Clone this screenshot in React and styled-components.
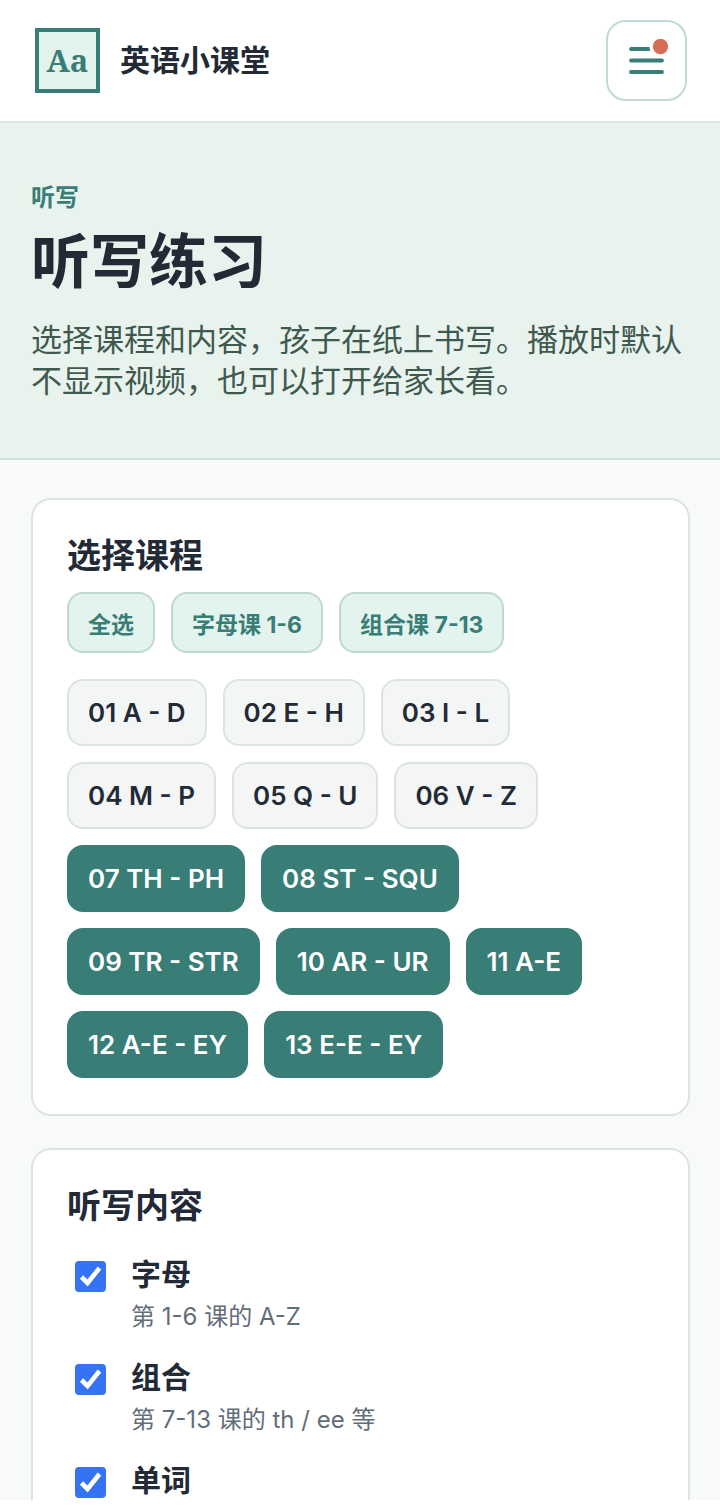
import { useState } from "react";
import styled, { createGlobalStyle } from "styled-components";

const lessonList = [
    "01 A - D",
    "02 E - H",
    "03 I - L",
    "04 M - P",
    "05 Q - U",
    "06 V - Z",
    "07 TH - PH",
    "08 ST - SQU",
    "09 TR - STR",
    "10 AR - UR",
    "11 A-E",
    "12 A-E - EY",
    "13 E-E - EY",
];

const contentList = [
    { id: "letters", name: "字母", hint: "第 1-6 课的 A-Z" },
    { id: "groups", name: "组合", hint: "第 7-13 课的 th / ee 等" },
    { id: "words", name: "单词" },
];

export default function App(){
    const [selected,setSelected] = useState(lessonList.slice(6));
    const [contents,setContents] = useState(["letters","groups","words"]);

    function toggle(list,setList,item){
        setList(list.includes(item) ? list.filter(i=>i !== item) : [...list,item]);
    }

    return(
        <Screen>
            <GlobalStyle/>
            <Header>
                <Brand href="#">
                    <Logo>Aa</Logo>
                    <span>英语小课堂</span>
                </Brand>
                <MenuButton type="button" aria-label="菜单">
                    <MenuIcon/>
                </MenuButton>
            </Header>
            <Hero>
                <Kicker>听写</Kicker>
                <h1>听写练习</h1>
                <p>选择课程和内容，孩子在纸上书写。播放时默认不显示视频，也可以打开给家长看。</p>
            </Hero>
            <Main>
                <Card>
                    <h2>选择课程</h2>
                    <Shortcuts>
                        <Shortcut type="button" onClick={()=>setSelected(lessonList)}>全选</Shortcut>
                        <Shortcut type="button" onClick={()=>setSelected(lessonList.slice(0,6))}>字母课 1-6</Shortcut>
                        <Shortcut type="button" onClick={()=>setSelected(lessonList.slice(6))}>组合课 7-13</Shortcut>
                    </Shortcuts>
                    <Lessons>
                        {lessonList.map(lesson=>(
                            <Lesson
                                key={lesson}
                                type="button"
                                aria-pressed={selected.includes(lesson)}
                                $active={selected.includes(lesson)}
                                onClick={()=>toggle(selected,setSelected,lesson)}
                            >
                                {lesson}
                            </Lesson>
                        ))}
                    </Lessons>
                </Card>
                <Card>
                    <h2>听写内容</h2>
                    <Options>
                        {contentList.map(({id,name,hint})=>(
                            <Option key={id} htmlFor={id}>
                                <Checkbox
                                    id={id}
                                    checked={contents.includes(id)}
                                    onChange={()=>toggle(contents,setContents,id)}
                                />
                                <OptionText>
                                    <strong>{name}</strong>
                                    {hint && <small>{hint}</small>}
                                </OptionText>
                            </Option>
                        ))}
                    </Options>
                </Card>
            </Main>
        </Screen>
    )
}

function MenuIcon(){
    return(
        <svg width="44" height="44" viewBox="0 0 44 44" fill="none" aria-hidden="true">
            <path d="M6 10H40M6 21.5H37M6 33H37" stroke="#387d76" strokeWidth="3.8" strokeLinecap="round"/>
            <circle cx="35.5" cy="7.5" r="11" fill="#fff"/>
            <circle cx="35.5" cy="7.5" r="7.7" fill="#d66e57"/>
        </svg>
    )
}

function Checkbox(props){
    return(
        <Tick>
            <input type="checkbox" {...props}/>
            <svg viewBox="0 0 31 31" fill="none" aria-hidden="true">
                <path d="M6.5 16L12.5 22L24.5 7" stroke="#fff" strokeWidth="4.6"/>
            </svg>
        </Tick>
    )
}

const GlobalStyle = createGlobalStyle`
    *{
        box-sizing: border-box;
    }
    body{
        margin: 0;
        background: #fff;
        color: #222a35;
        font-family: Inter, "Noto Sans CJK SC", sans-serif;
    }
    button{
        font-family: inherit;
        cursor: pointer;
    }
    h1,h2,p{
        margin: 0;
    }
`
const Screen = styled.div`
    height: 100vh;
    border-bottom: 7px solid #fff;
    background: #f7faf7;
    overflow: hidden;
`
const Header = styled.header`
    display: flex;
    justify-content: space-between;
    align-items: center;
    padding: 20px 33px 20px 35px;
    border-bottom: 2px solid #dae5e1;
    background: #fff;
`
const Brand = styled.a`
    display: flex;
    align-items: center;
    gap: 20px;
    color: inherit;
    font-size: 30px;
    font-weight: 700;
    line-height: 41px;
    text-decoration: none;
`
const Logo = styled.span`
    display: flex;
    justify-content: center;
    align-items: center;
    width: 65px;
    height: 65px;
    border: 4px solid #387d76;
    background: #e3f3ed;
    color: #387d76;
    font-family: "Noto Serif", "Liberation Serif", serif;
    font-size: 31px;
`
const MenuButton = styled.button`
    display: flex;
    justify-content: center;
    align-items: center;
    width: 81px;
    height: 81px;
    padding: 0;
    border: 2px solid #c1dad2;
    border-radius: 20px;
    background: #fff;
`
const Hero = styled.section`
    padding: 57px 31px;
    border-bottom: 2px solid #d1e2dc;
    background: #e8f3ed;
    h1{
        margin: 8px 0 19px;
        font-size: 59px;
        font-weight: 700;
        line-height: 76px;
    }
    p{
        color: #3f594f;
        font-size: 31px;
        line-height: 41px;
    }
`
const Kicker = styled.div`
    color: #387d76;
    font-size: 24px;
    font-weight: 700;
    line-height: 36px;
`
const Main = styled.main`
    display: flex;
    flex-direction: column;
    gap: 32px;
    padding: 38px 30px 38px 31px;
`
const Card = styled.section`
    padding: 33px 34px 36px;
    border: 2px solid #dce3e6;
    border-radius: 20px;
    background: #fff;
    h2{
        font-size: 34px;
        font-weight: 700;
        line-height: 46px;
    }
`
const Shortcuts = styled.div`
    display: flex;
    flex-wrap: wrap;
    gap: 16px;
    margin: 13px 0 26px;
`
const Shortcut = styled.button`
    height: 61px;
    padding: 0 19px;
    border: 2px solid #bfd9d0;
    border-radius: 16px;
    background: #e3f3ed;
    color: #387d76;
    font-size: 23px;
    font-weight: 700;
`
const Lessons = styled.div`
    display: flex;
    flex-wrap: wrap;
    gap: 16px;
`
const Lesson = styled.button`
    height: 67px;
    padding: 0 19px;
    border: 2px solid ${({$active})=>$active ? "#387d76" : "#dce3e6"};
    border-radius: 16px;
    background: ${({$active})=>$active ? "#387d76" : "#f4f6f6"};
    color: ${({$active})=>$active ? "#fff" : "#222a35"};
    font-size: 26px;
    font-weight: 600;
`
const Options = styled.div`
    display: flex;
    flex-direction: column;
    gap: 22px;
    margin-top: 24px;
`
const Option = styled.label`
    display: flex;
    gap: 25px;
    padding-left: 8px;
    cursor: pointer;
`
const Tick = styled.span`
    position: relative;
    flex: none;
    width: 31px;
    height: 31px;
    margin-top: 8px;
    input{
        appearance: none;
        display: block;
        width: 100%;
        height: 100%;
        margin: 0;
        border: 2px solid #3672f4;
        border-radius: 4px;
        background: #fff;
    }
    input:checked{
        background: #3672f4;
    }
    svg{
        position: absolute;
        inset: 0;
        width: 100%;
        height: 100%;
        pointer-events: none;
    }
`
const OptionText = styled.span`
    display: flex;
    flex-direction: column;
    gap: 5px;
    strong{
        font-size: 30px;
        font-weight: 700;
        line-height: 42px;
    }
    small{
        color: #626d79;
        font-size: 24px;
        line-height: 34px;
    }
`
